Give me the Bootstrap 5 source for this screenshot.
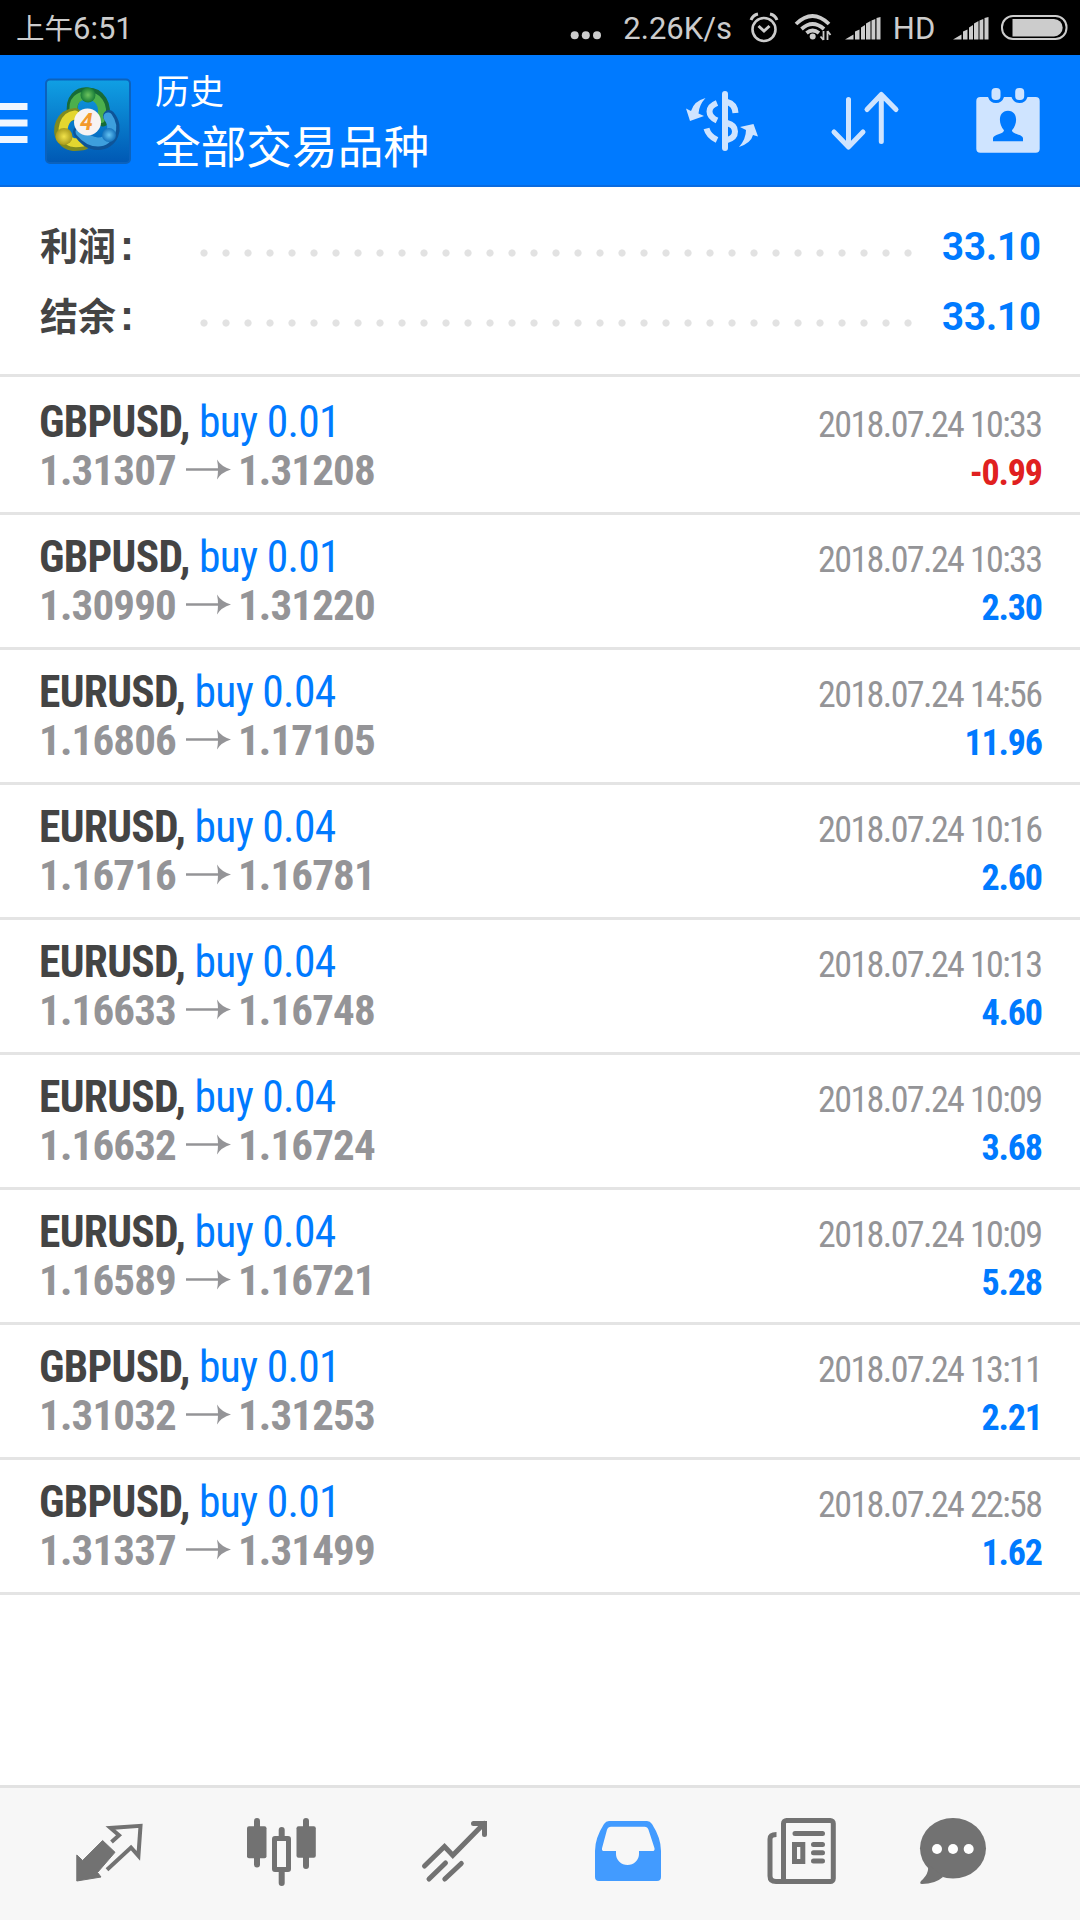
<!DOCTYPE html>
<html lang="zh-CN">
<head>
<meta charset="utf-8">
<meta name="viewport" content="width=device-width, initial-scale=1">
<title>历史</title>
<link href="https://cdn.jsdelivr.net/npm/bootstrap@5.3.0/dist/css/bootstrap.min.css" rel="stylesheet">
<style>
body{font-family:Roboto,"Noto Sans CJK SC",sans-serif;background:#fff;width:1080px;height:1920px;overflow:hidden}
svg{display:block;flex:none}
.status{height:55px;background:#000;color:#ccc;padding:0 12px 0 16px;font-size:31px;line-height:58px;white-space:nowrap}
.status svg{height:55px}
.clock-zh{font-size:28.5px}
.speed{width:130px}
.hd{width:56px}
.appbar{height:132px;background:#007aff;border-bottom:2px solid #0a6be0;color:#fff}
.appbar svg{height:130px}
.t1{font-size:34.5px;line-height:40px;padding-top:17px}
.t2{font-size:45.7px;line-height:54px;padding-top:10px}
.summary{height:190px;border-bottom:3px solid #e4e4e4;padding:25px 39px 0 40px}
.sumline{height:70px;line-height:70px;font-weight:700;font-size:38.3px}
.sumlabel{width:153px;color:#444;font-size:38px;font-weight:700}
.colon{font-family:"Liberation Sans",sans-serif;font-weight:700;font-size:42px;line-height:1;margin-left:4px}
.dots{width:726px;height:8px;margin-top:12px;background:radial-gradient(circle at 11px 4px,#e2e2e2 3.2px,transparent 4px) 0 0/22px 8px repeat-x}
.pos{color:#007aff}.neg{color:#e02020}
.deals{padding-top:3px}
.deal{height:135px;border-bottom:3px solid #e4e4e4;padding:19px 37px 0 39px}
.cond{font-family:"Roboto Condensed",Roboto,sans-serif;font-stretch:75%;white-space:pre}
.l1,.l2{height:47px;line-height:48px}
.sym{font-size:43.5px;font-weight:700;color:#444;letter-spacing:-.7px}
.side{font-size:43.5px;letter-spacing:-.7px}
.price{font-size:43px;font-weight:700;color:#949497;letter-spacing:-.85px}
.date{font-size:36px;color:#949497;letter-spacing:-1.6px;padding:2px 1.600px 0 0}
.amt{font-size:36px;font-weight:700;letter-spacing:-1.2px;padding:3px 1.200px 0 0}
.tabs{height:135px;background:#f7f7f7;border-top:3px solid #e2e2e2}
.tabs svg{height:132px;color:#727272}
</style>
</head>
<body class="d-flex flex-column">
<header>
 <div class="status d-flex">
  <span><span class="clock-zh">上午</span><span>6:51</span></span>
  <svg class="ms-auto" width="34" viewBox="567 0 34 55" fill="#ccc"><circle cx="573.7" cy="35.3" r="4"/><circle cx="584.8" cy="35.3" r="4"/><circle cx="596" cy="35.3" r="4"/></svg>
  <span class="speed text-end">2.26K/s</span>
  <svg width="48" viewBox="732 0 48 55" fill="none" stroke="#ccc" stroke-width="2.6"><circle cx="764" cy="29.5" r="11.5"/><path d="M758.5 26l5.5 5 5.5-5" stroke-width="3"/><path d="M751 20q2-5 7-6M777 20q-2-5-7-6" stroke-width="3"/></svg>
  <svg width="54" viewBox="780 0 54 55" fill="none" stroke="#ccc" stroke-width="3.8"><path d="M796 24Q812.5 8 829 24M801.500 29Q812.500 19 824 29M806.500 33Q812.500 28 819 33"/><circle cx="812.700" cy="36.500" r="3" fill="#ccc" stroke="none"/><path d="M823.500 31v9m-3-3.500l3 3.500M827.500 40v-9m3 4l-3-4" stroke-width="1.800"/></svg>
  <svg width="52" viewBox="834 0 52 55" fill="#ccc"><path id="sig" d="M845 39.500l8.500-5v5zM855 39.500v-8l4.500-2v10zM861 39.500v-12l4-2.500v14.500zM866 39.500v-16l4.500-2.500v18.500zM871.500 39.500v-19l3.800-1.500v20.500zM876.500 39.500v-21.500l4-1v22.500z"/></svg>
  <span class="hd text-center">HD</span>
  <svg width="50" viewBox="834 0 50 55" fill="#ccc"><use href="#sig"/></svg>
  <svg width="76" viewBox="992 0 76 55"><rect x="1002" y="16" width="64.500" height="23" rx="11" fill="none" stroke="#ccc" stroke-width="2"/><path d="M1012.500 19h41.500a8.700 8.700 0 0 1 0 17.400h-41.500z" fill="#ccc"/></svg>
 </div>
 <div class="appbar d-flex">
  <svg width="155" viewBox="0 55 155 130">
   <defs><linearGradient id="bg" x1="0" y1="0" x2="0" y2="1"><stop offset="0" stop-color="#10a0e4"/><stop offset="1" stop-color="#0058b4"/></linearGradient>
   <radialGradient id="g"><stop offset="0" stop-color="#6cc45e"/><stop offset="1" stop-color="#187c38"/></radialGradient>
   <radialGradient id="y"><stop offset="0" stop-color="#f2e34a"/><stop offset="1" stop-color="#a89a1c"/></radialGradient>
   <radialGradient id="b"><stop offset="0" stop-color="#65c4f4"/><stop offset="1" stop-color="#1572bc"/></radialGradient></defs>
   <path d="M0 103h27.500v7H0zM0 119.500h27.500v7H0zM0 136h27.500v7H0z" fill="#f0f6ff"/>
   <rect x="46" y="79.500" width="84" height="83.500" rx="4" fill="url(#bg)" stroke="#0b62bd" stroke-width="2"/>
   <g fill="none" stroke-linecap="round">
    <path d="M73 115C69 98 80 92 88 93C99 93 108 104 103 121" stroke="#176b38" stroke-width="11"/><path d="M74 114C71 99 80 95 88 96C97 96 105 104 101 119" stroke="#4caf4c" stroke-width="8"/>
    <path d="M75 114C62 115 56 130 63 139C69 147 77 145 84 144" stroke="#7f8a20" stroke-width="12"/><path d="M75 115C64 116 60 131 66 138C71 144 77 143 83 142" stroke="#e3d62f" stroke-width="9"/>
    <path d="M109 116C119 128 112 144 98 144C89 144 84 139 79 132" stroke="#0e5498" stroke-width="12"/><path d="M108 117C116 128 110 142 98 142C90 142 85 138 80 132" stroke="#3d9fdd" stroke-width="9"/>
   </g>
   <circle cx="88" cy="95" r="7.500" fill="url(#g)"/><circle cx="64" cy="136.500" r="8.500" fill="url(#y)"/><circle cx="109" cy="135" r="7" fill="url(#b)"/>
   <circle cx="87.500" cy="122" r="13.500" fill="#f7f3f3"/>
   <text x="86.500" y="130" text-anchor="middle" font-family="Roboto,sans-serif" font-size="23" font-weight="700" font-style="italic" fill="#f39a2b">4</text>
  </svg>
  <div class="flex-grow-1"><div class="t1">历史</div><div class="t2">全部交易品种</div></div>
  <svg width="410" viewBox="670 55 410 130" fill="none" stroke="#cfe4ff" stroke-width="5" stroke-linecap="round" stroke-linejoin="round">
   <g stroke-width="6" stroke-linecap="butt"><path d="M725 94v54" stroke-linecap="round"/><path d="M717 103Q709.500 106 709.500 111.500T717 120.500M706.500 128.500Q708.500 136 717 140M727 102Q735 104 735.500 113M727 123Q735 125 735 131.500T727 140"/></g>
   <g fill="#cfe4ff" stroke="none"><path d="M705.500 98Q694 101 691 111L686 108.500 690 121 704 116 698.500 113.500Q699 105 705.500 98zM739 147Q751 143 753 135L758 136.500 753.500 124 740 127 746 130Q746 139 739 147z"/></g>
   <path d="M848.500 99.500v47M834 132l14.500 15 14.500-15M881.300 141.500V94.500M867 109.500l14.300-15 14.700 15"/>
   <g stroke="none" fill="#cfe4ff"><rect x="976.300" y="97" width="63.400" height="55.700" rx="4"/><g fill="#007aff"><path d="M988 96v1q2 6 8 6t8-6v-1zM1011.500 96v1q2 6 8 6t8-6v-1z"/><path d="M993 141.300v-3c0-4 11-4 11-8-6-7-6-19 4-19.500 10 .5 10 12.500 4 19.500 0 4 11 4 11 8v3z"/></g><rect x="991.500" y="88" width="9" height="12" rx="4"/><rect x="1015.200" y="88" width="9" height="12" rx="4"/></g>
  </svg>
 </div>
</header>
<main class="flex-grow-1">
 <section class="summary">
  <div class="sumline d-flex align-items-center"><span class="sumlabel">利润<span class="colon">:</span></span><span class="dots"></span><span class="pos ms-auto">33.10</span></div>
  <div class="sumline d-flex align-items-center"><span class="sumlabel">结余<span class="colon">:</span></span><span class="dots"></span><span class="pos ms-auto">33.10</span></div>
 </section>
 <section class="deals" id="deals"></section>
</main>
<nav class="tabs d-flex">
 <svg width="180" viewBox="0 1788 180 132" fill="currentColor"><path stroke="currentColor" stroke-linejoin="round" d="M102.600 1840.500L115 1852.300 97.500 1872.500 101 1877 76.800 1881V1855L82.600 1860.500z"/><path d="M111.500 1842l7.500-6.700-8.500-7.300 30-2.200-2.100 30-7.400-8.300-24 22.200" fill="none" stroke="currentColor" stroke-width="4"/></svg>
 <svg width="180" viewBox="180 1788 180 132" fill="none" stroke="currentColor" stroke-width="6" stroke-linecap="round"><path d="M257 1821v43.500M306 1821v45M281.700 1830v8M281.700 1872v11"/><g stroke="none" fill="currentColor"><rect x="247" y="1826.300" width="19.500" height="32" rx="2"/><rect x="296.500" y="1826.300" width="19.300" height="31.500" rx="2"/></g><rect x="274.500" y="1838.500" width="14" height="31" rx=".5" stroke-width="5"/></svg>
 <svg width="180" viewBox="360 1788 180 132" fill="none" stroke="currentColor" stroke-width="5" stroke-linecap="round"><path d="M424.500 1866l20-19.500 8.300 8.800 31.500-32M473.500 1823.500h11v11M429 1879l16.500-16M444.800 1879l16.500-15.500"/></svg>
 <svg width="180" viewBox="540 1788 180 132"><path fill="#429bff" fill-rule="evenodd" d="M609 1821h38q3 0 5 3 9 14 9 27v26q0 4-4 4h-58q-4 0-4-4v-26q0-13 9-27 2-3 5-3zM611 1826.700q-3 0-4 3l-5 18.500q-.5 2.800 2 2.800h12v3a11.500 11 0 0 0 23 0v-3h13.500q2.500 0 2-2.800l-6-18.500q-1-3-4-3z"/></svg>
 <svg width="145" viewBox="720 1788 145 132" fill="none" stroke="currentColor" stroke-width="5" stroke-linecap="round"><rect x="783.500" y="1820.500" width="49.800" height="61" rx="3"/><path stroke-linecap="butt" d="M776.500 1834.500q-6.500 0-6.500 4.500v37q0 5.500 6 5.500h10"/><path d="M795 1833.500h27.500M813.500 1844.500h9M813.500 1852.800h9M813.500 1861h9"/><rect x="794.500" y="1844.500" width="8.300" height="17"/></svg>
 <svg width="215" viewBox="865 1788 215 132"><ellipse cx="953" cy="1848.300" rx="33" ry="30.300" fill="currentColor"/><path d="M926 1862q6 9-5 19-2 3 1 3 13 0 21-7z" fill="currentColor"/><g fill="#fff"><circle cx="937" cy="1849" r="5"/><circle cx="953" cy="1849" r="5"/><circle cx="968.700" cy="1849" r="5"/></g></svg>
</nav>
<script src="https://cdn.jsdelivr.net/npm/bootstrap@5.3.0/dist/js/bootstrap.bundle.min.js"></script>
<script>
const deals=[
["GBPUSD","0.01","1.31307","1.31208","10:33","-0.99"],
["GBPUSD","0.01","1.30990","1.31220","10:33","2.30"],
["EURUSD","0.04","1.16806","1.17105","14:56","11.96"],
["EURUSD","0.04","1.16716","1.16781","10:16","2.60"],
["EURUSD","0.04","1.16633","1.16748","10:13","4.60"],
["EURUSD","0.04","1.16632","1.16724","10:09","3.68"],
["EURUSD","0.04","1.16589","1.16721","10:09","5.28"],
["GBPUSD","0.01","1.31032","1.31253","13:11","2.21"],
["GBPUSD","0.01","1.31337","1.31499","22:58","1.62"]];
document.getElementById("deals").innerHTML=deals.map(([s,v,a,b,t,p])=>`
<article class="deal cond">
<div class="l1 d-flex justify-content-between"><span><span class="sym">${s},</span><span class="side pos"> buy ${v}</span></span><span class="date">2018.07.24 ${t}</span></div>
<div class="l2 d-flex justify-content-between"><span class="price d-flex">${a}<svg width="62" height="48" viewBox="0 0 62 48"><path d="M10 23.500h36" stroke="#949497" stroke-width="2.500"/><path d="M41 13.500q4 7 14 10-10 3-14 10 2-10 0-20z" fill="#949497"/></svg>${b}</span><span class="amt ${p[0]=="-"?"neg":"pos"}">${p}</span></div>
</article>`.replace(/>\n</g,"><")).join("");
</script>
</body>
</html>
